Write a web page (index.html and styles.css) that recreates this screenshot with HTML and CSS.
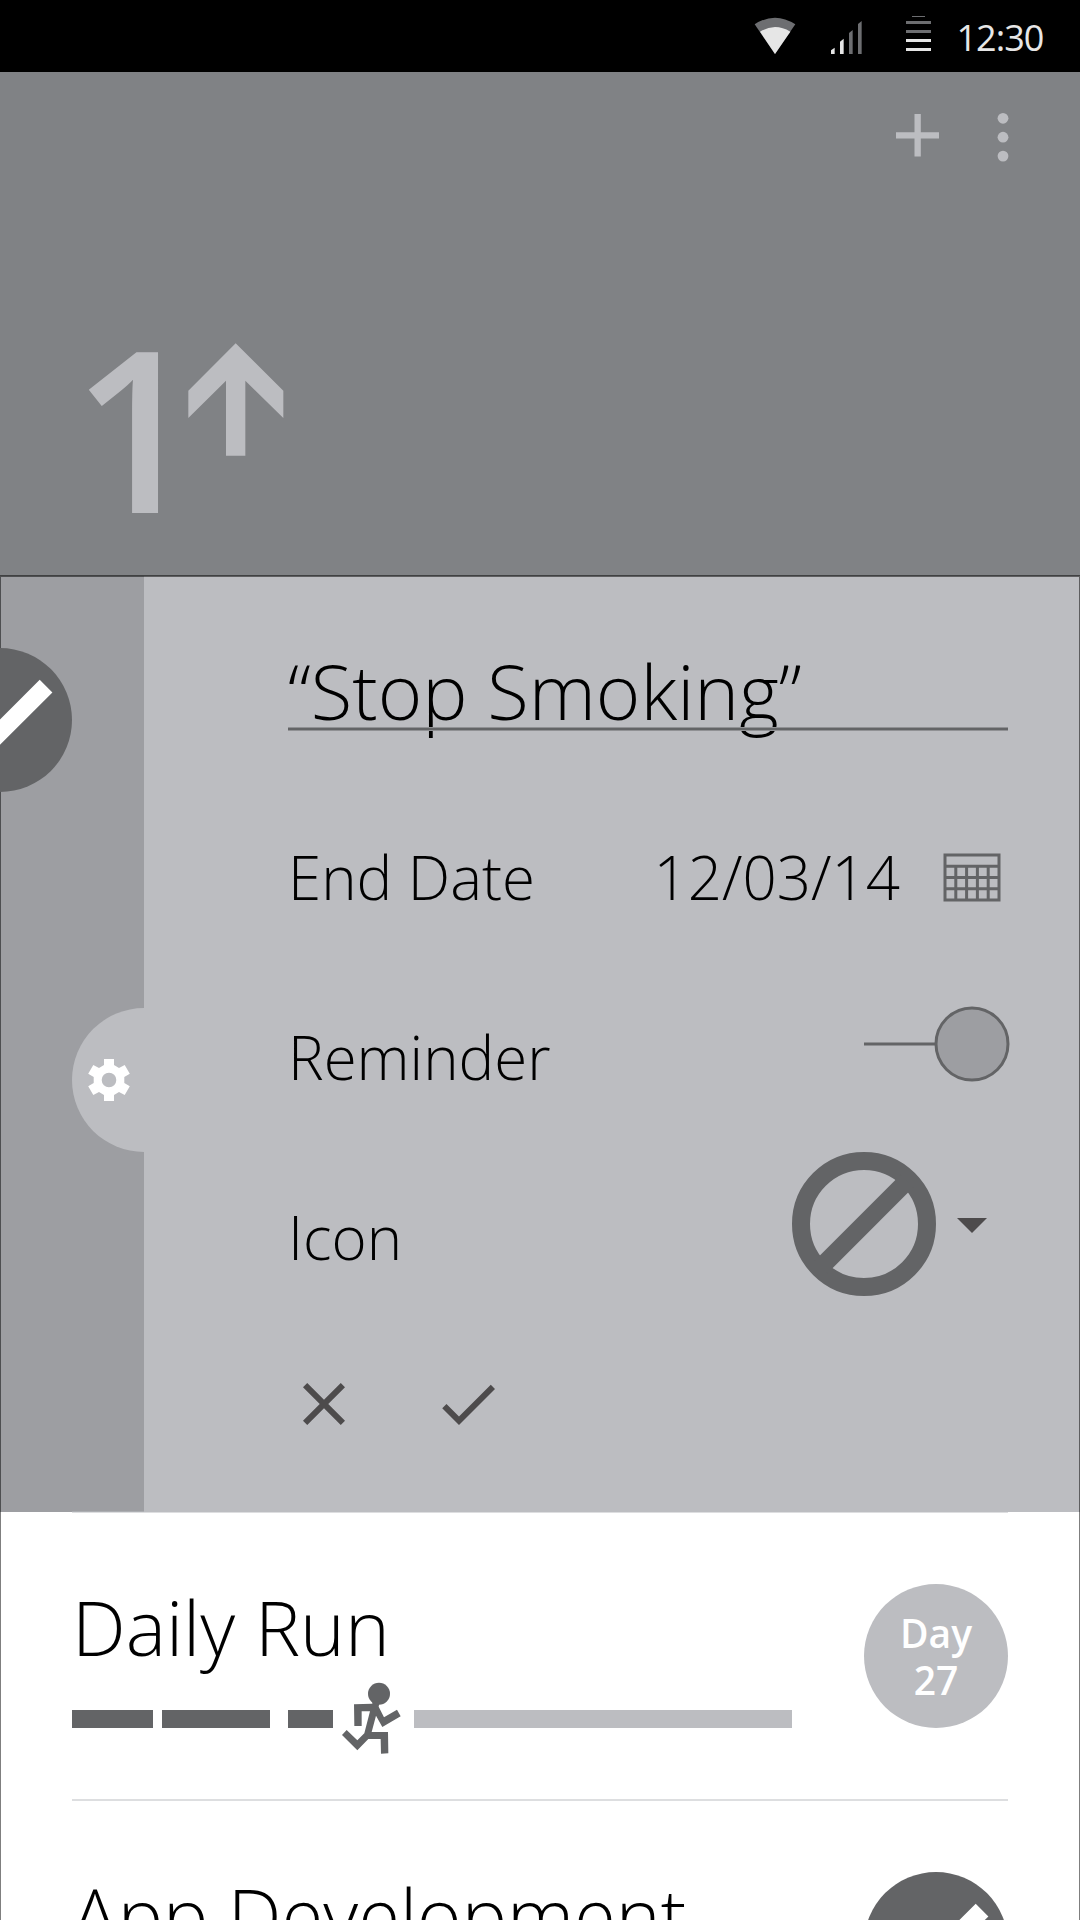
FILE: index.html
```html
<!DOCTYPE html>
<html lang="en">
<head>
<meta charset="utf-8">
<title>1Up</title>
<link rel="stylesheet" href="styles.css">
</head>
<body>
<div class="screen">
  <div class="status-bar">
    <svg class="wifi" width="42" height="38" viewBox="0 0 126 114">
      <path class="dim" d="M2 22Q63 -18 124 22L63 111Z"/>
      <path class="lit" d="M18 44Q63 16 109 44L63 111Z"/>
    </svg>
    <svg class="signal" width="31" height="33" viewBox="0 0 93 99">
      <path class="lit" d="M0 99V88L11 80V99ZM27 99V62L38 53V99Z"/>
      <path class="dim" d="M54 99V36L65 27V99ZM81 99V9L92 0V99Z"/>
    </svg>
    <svg class="battery" width="25" height="35" viewBox="0 0 25 35">
      <path class="dim" d="M6 0h13v1H6zM0 5h25v3H0zM0 14h25v3H0z"/>
      <path class="lit" d="M0 23h25v3H0zM0 32h25v3H0z"/>
    </svg>
    <span class="clock">12:30</span>
  </div>

  <header class="header">
    <div class="actions">
      <svg class="add" width="43" height="43" viewBox="0 0 43 43"><path d="M0 18.3h18.5V0h6.3v18.3H43v6.3H24.800v18H18.500v-18H0z"/></svg>
      <svg width="12" height="50" viewBox="0 0 12 50"><circle cx="6" cy="6.300" r="5.400"/><circle cx="6" cy="25.200" r="5.400"/><circle cx="6" cy="44.100" r="5.400"/></svg>
    </div>
    <div class="logo">
      <span class="logo-digit">1</span>
      <svg class="logo-arrow" width="96" height="114" viewBox="0 0 288 342"><path d="M143 1L286 143V225L172 113V338H114V113L1 225V143Z"/></svg>
    </div>
  </header>

  <section class="panel">
    <div class="rail">
      <div class="done-badge">
        <svg width="144" height="144" viewBox="-72 -72 144 144"><path class="badge-fill" d="M-72 0A72 72 0 1 1 72 0A72 72 0 1 1 -72 0Z"/><path class="badge-check" d="M39.700 -40.300L52.400 -27.600L-14 38.800L-46 6.800L-33.300 -6.100L-14 13.400Z"/></svg>
      </div>
      <div class="settings-tab">
        <svg width="42" height="42" viewBox="-21 -21 42 42"><path fill-rule="evenodd" d="M-5 -21H5V-15L10 -12L15.700 -15L20.800 -6.300L15.300 -3V3L20.800 6.300L15.700 15L10 12L5 15V21H-5V15L-10 12L-15.700 15L-20.800 6.300L-15.300 3V-3L-20.800 -6.300L-15.700 -15L-10 -12L-5 -15ZM0 -7.300A7.300 7.300 0 1 0 0 7.300A7.300 7.300 0 1 0 0 -7.300Z"/></svg>
      </div>
    </div>
    <div class="form">
      <div class="title-field"><span class="title-text">“Stop Smoking”</span></div>
      <div class="row">
        <span class="label">End Date</span>
        <span class="control">
          <span class="date-text">12/03/14</span>
          <svg class="calendar" width="60" height="50" viewBox="942 852 60 50"><path d="M945 855H999V900H945ZM945 866.200H999M945 877.500H999M945 888.800H999M955.800 866V900M966.600 866V900M977.400 866V900M988.200 866V900"/></svg>
        </span>
      </div>
      <div class="row">
        <span class="label">Reminder</span>
        <svg class="toggle" width="146" height="76" viewBox="0 0 146 76"><path d="M0 38H72"/><circle cx="108" cy="38" r="36"/></svg>
      </div>
      <div class="row">
        <span class="label">Icon</span>
        <span class="control picker">
          <svg class="ban" width="144" height="144" viewBox="-72 -72 144 144"><circle r="63"/><path d="M-43 43L43 -43"/></svg>
          <svg class="caret" width="30" height="17" viewBox="0 0 30 17"><path d="M0 2H30L15 17Z"/></svg>
        </span>
      </div>
      <div class="buttons">
        <svg width="72" height="72" viewBox="0 0 24 24"><path d="M19 6.410L17.590 5 12 10.590 6.410 5 5 6.410 10.590 12 5 17.590 6.410 19 12 13.410 17.590 19 19 17.590 13.410 12z"/></svg>
        <svg width="72" height="72" viewBox="0 0 24 24"><path d="M9 16.170L4.830 12l-1.420 1.410L9 19 21 7l-1.410-1.410z"/></svg>
      </div>
    </div>
  </section>

  <ul class="goals">
    <li class="goal">
      <div class="goal-main">
        <div class="goal-name">Daily Run</div>
        <div class="progress">
          <span class="seg" style="width:81px"></span>
          <span class="seg" style="width:108px;margin-left:9px"></span>
          <span class="seg" style="width:45px;margin-left:18px"></span>
          <svg class="runner" width="63" height="78" viewBox="60 60 189 234"><circle cx="177" cy="101" r="33"/><path d="M102 133L157 131V124H179L176 140L192 172L231 149L242 169L187 201L168 167L155 216H204L205 280L183 281L182 237H145L112 271L66 225L80 210L112 241L133 220L150 154H125V198H103Z"/></svg>
          <span class="seg rest"></span>
        </div>
      </div>
      <div class="day-badge">Day<br>27</div>
    </li>
    <li class="goal">
      <div class="goal-main">
        <div class="goal-name">App Development</div>
      </div>
      <svg width="144" height="144" viewBox="-72 -72 144 144"><path class="badge-fill" d="M-72 0A72 72 0 1 1 72 0A72 72 0 1 1 -72 0Z"/><path class="badge-check" d="M39.700 -40.300L52.400 -27.600L-14 38.800L-46 6.800L-33.300 -6.100L-14 13.400Z"/></svg>
    </li>
  </ul>
</div>
</body>
</html>
```
FILE: styles.css
```css
* { box-sizing: border-box; }
html, body { margin: 0; padding: 0; }
body { font-family: "Open Sans", "Noto Sans", sans-serif; font-weight: 300; color: #000; }
svg { display: block; flex: none; }

.screen {
  position: relative;
  display: flex;
  flex-direction: column;
  width: 1080px;
  height: 1920px;
  overflow: hidden;
  background: #fff;
}
/* hairline frame around the content area */
.screen::after {
  content: "";
  position: absolute;
  inset: 575px 0 -2px 0;
  border: 1px solid rgba(0, 0, 0, .5);
  border-top-width: 2px;
  pointer-events: none;
}

.status-bar {
  flex: none;
  display: flex;
  align-items: flex-start;
  height: 72px;
  padding: 16px 0 0 753.500px;
  background: #000;
}
.lit { fill: #e6e6e6; }
.dim { fill: #6d6e71; }
.wifi { margin-top: 1px; }
.signal { margin: 5px 0 0 35px; }
.battery { margin-left: 44px; }
.clock {
  margin: -2px 0 0 26px;
  font-size: 36px;
  line-height: 48px;
  font-weight: 400;
  letter-spacing: -1px;
  color: #e6e6e6;
}

.header {
  flex: none;
  display: flex;
  flex-direction: column;
  height: 504px;
  background: #808285;
  fill: #bcbdc1;
  color: #bcbdc1;
}
.actions {
  display: flex;
  justify-content: flex-end;
  align-items: center;
  gap: 58px;
  padding: 40px 71px 0 0;
}
.add { margin-bottom: 4px; }
.logo { display: flex; align-items: flex-start; padding-left: 72px; margin-top: 181px; }
.logo-digit { width: 116px; margin-top: 2px; font-size: 225px; line-height: 163px; font-weight: 600; }

.panel { flex: none; display: flex; height: 936px; background: #bcbdc1; }
.rail { display: flex; flex-direction: column; width: 144px; background: #9d9ea2; }
.done-badge { position: relative; z-index: 1; margin: 72px 0 0 -72px; width: 144px; }
.badge-fill { fill: #636466; }
.badge-check { fill: #fff; }
.settings-tab {
  display: flex;
  align-items: center;
  align-self: flex-end;
  width: 72px;
  height: 144px;
  margin-top: 216px;
  padding-left: 16px;
  border-radius: 72px 0 0 72px;
  background: #bcbdc1;
  fill: #fff;
}

.form { flex: 1; padding: 72px 72px 0 144px; }
.title-field {
  height: 83px;
  font-size: 76px;
  line-height: 86px;
}
.title-text { display: block; height: 79px; }
/* the rule runs across the descenders */
.title-field::after {
  content: "";
  position: relative;
  display: block;
  height: 4px;
  background: linear-gradient(#909194 1px, #636466 1px 3px, #909194 3px);
}
.row { display: flex; justify-content: space-between; height: 180px; }
.title-field + .row { margin-top: 81px; }
.label, .date-text { padding-top: 20px; font-size: 60px; line-height: 90px; white-space: nowrap; }
.control { display: flex; }
.calendar { margin: 40px 6px 0 42px; fill: none; stroke: #636466; stroke-width: 3; }
.toggle { margin: 14px -2px 0 0; fill: #9d9ea2; stroke: #636466; stroke-width: 3; }
.picker { align-items: center; height: 144px; margin: -20px 21px 0 0; gap: 21px; }
.ban { fill: none; stroke: #636466; stroke-width: 18; }
.caret { fill: #4d4b4c; }
.buttons { display: flex; gap: 72px; margin-top: 16px; fill: #4d4b4c; }

.goals { list-style: none; margin: -1px 72px 0; padding: 0; }
.goal {
  display: flex;
  justify-content: space-between;
  height: 288px;
  padding-top: 71px;
  border-top: 2px solid rgba(188, 189, 193, .5);
}
.goal-main { width: 720px; }
.goal-name { font-size: 76px; line-height: 86px; white-space: nowrap; }
.progress { display: flex; align-items: center; height: 78px; margin-top: 10px; }
.seg { height: 18px; background: #636466; }
.rest { flex: 1; background: #bcbdc1; }
.runner { margin: 0 11px 0 7px; fill: #636466; }
.day-badge {
  display: grid;
  place-items: center;
  width: 144px;
  height: 144px;
  border-radius: 50%;
  background: #bcbdc1;
  color: #fff;
  font-size: 39px;
  font-weight: 600;
  line-height: 47px;
  text-align: center;
}
```
